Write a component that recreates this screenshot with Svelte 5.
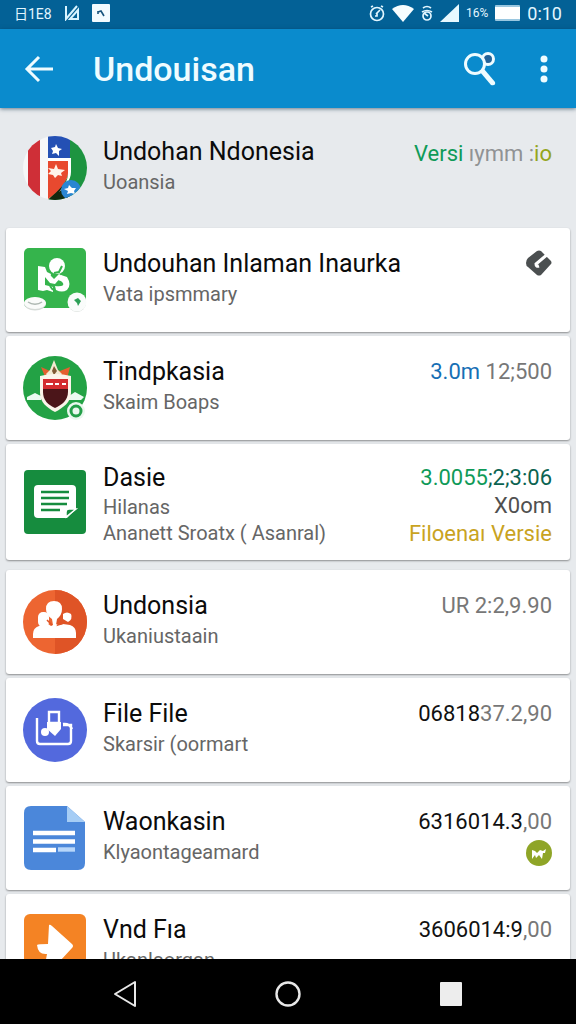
<script>
  const groups = [
    [
      {
        icon: "people",
        title: "Undouhan Inlaman Inaurka",
        lines: ["Vata ipsmmary"],
        meta: [],
        badge: "tag"
      },
      {
        icon: "crest",
        title: "Tindpkasia",
        lines: ["Skaim Boaps"],
        meta: [[["3.0m", "blue"], [" 12;500", "grey"]]]
      },
      {
        icon: "note",
        title: "Dasie",
        lines: ["Hilanas", "Ananett Sroatx ( Asanral)"],
        meta: [
          [["3.0055", "green"], [";2;3:06", "teal"]],
          [["X0om", "dark"]],
          [["Filoenaı Versie", "gold"]]
        ]
      }
    ],
    [
      {
        icon: "team",
        title: "Undonsia",
        lines: ["Ukaniustaain"],
        meta: [[["UR 2:2,9.90", "grey"]]]
      },
      {
        icon: "inbox",
        title: "File File",
        lines: ["Skarsir (oormart"],
        meta: [[["06818", "black"], ["37.2,90", "grey"]]]
      },
      {
        icon: "doc",
        title: "Waonkasin",
        lines: ["Klyaontageamard"],
        meta: [[["6316014.3", "black"], [",00", "grey"]]],
        badge: "leaf"
      },
      {
        icon: "arrow",
        title: "Vnd Fıa",
        lines: ["Ukanlaorgan"],
        meta: [[["3606014:9", "black"], [",00", "grey"]]]
      }
    ]
  ];
</script>

{#snippet rowIcon(name)}
  <svg class="row-icon" viewBox="0 0 64 64" aria-hidden="true">
    {#if name === "flag"}
      <clipPath id="flag-clip"><circle cx="32" cy="32" r="32" /></clipPath>
      <g clip-path="url(#flag-clip)">
        <rect width="64" height="64" fill="#f6f7f8" />
        <rect x="5" width="12" height="64" fill="#cf2f37" />
        <rect x="25" width="22" height="22" fill="#2450b4" />
        <path d="M47 0h17v64H25l19-22 3-18z" fill="#1d9440" />
        <path d="M25 64l14-14 10 14z" fill="#10280f" />
        <path d="M25 25h20v12c0 8-9 18-20 26z" fill="#e8492f" />
        <path d="M25 22h23v14c0 8-6 15-12 20 5-6 9-12 9-18V25H25z" fill="#fff" />
        <path d="M33 8l2 4 4 1-3 2v5l-3-3-4 1 1-3-2-3 4-1z" fill="#fff" />
        <path d="M33 28l2 5 7 1-4 3 1 3-4-1-3 3-2-3-5-1 3-3-3-3 6 1z" fill="#fff3ea" />
        <circle cx="48" cy="54" r="10" fill="#2a86d2" />
        <path d="M46 49l3 3 4 0-2 3 1 3-4-1-4 1 1-3-4-2 4-1z" fill="#fff" />
      </g>
    {:else if name === "people"}
      <rect x="1" width="62" height="60" rx="5" fill="#35b44c" />
      <circle cx="34" cy="18" r="8" fill="#fff" />
      <path d="M15 18l7 1 2 5 4 2-1 4-5-1v8l8 2v5l-6-2-4 1-5-1z" fill="#fff" />
      <path d="M22 29l5-2 4 4 5-5 3 2-7 8-5-1z" fill="#fff" />
      <path d="M38 27l6 2q5 8 0 13-5 3-11 0l-1-4q10 1 8-3-1-2-5-3z" fill="#fff" />
      <path d="M31 25l5-1 3-6M27 38l3 4" fill="none" stroke="#35b44c" stroke-width="2" />
      <ellipse cx="12" cy="56" rx="11" ry="6.500" fill="#d5dad7" />
      <ellipse cx="12" cy="55" rx="11" ry="6" fill="#fafbfa" />
      <path d="M5 54c4 3 10 3 14 0" fill="none" stroke="#aeb8b2" stroke-width="1.500" />
      <circle cx="54" cy="55" r="9" fill="#d5dad7" />
      <circle cx="54" cy="54" r="9.500" fill="#fafcfb" />
      <path d="M51 52l4-2 3 3-3 5-1-3z" fill="#2da057" />
    {:else if name === "crest"}
      <circle cx="32" cy="32" r="32" fill="#23a245" />
      <path d="M4 41l8-4 6 3v4H4zM46 40l6-4 9 5-3 3H46z" fill="#eafaf0" />
      <path d="M18 11l9 4 5-2 5 2 10-4-3 12H23z" fill="#e4602f" />
      <path d="M31 4l4 10 4 4-3 4h-10l-3-4 4-4z" fill="#f3ead2" />
      <path d="M31 10l3 5-3 4-2-4z" fill="#805a35" />
      <path d="M17 20q15-4 31 0v17c0 9-8 15-16 19-8-4-15-10-15-19z" fill="#fbf4ea" />
      <path d="M20 23h25v13c0 8-6 13-13 16-7-3-12-8-12-16z" fill="#4b1519" />
      <path d="M20 23h25v10H20z" fill="#d42c2f" />
      <path d="M23 28h7M32 28h4M39 28h4" stroke="#fff" stroke-width="2" />
      <circle cx="53" cy="55" r="9" fill="#eaf8ee" />
      <circle cx="53" cy="55" r="5" fill="none" stroke="#249f49" stroke-width="3" />
    {:else if name === "note"}
      <rect x="1" width="62" height="64" rx="4" fill="#168c3e" />
      <path d="M15 15h34q4 0 4 4v20l-9 9H15q-4 0-4-4V19q0-4 4-4z" fill="#fff" />
      <path d="M18 22h28M18 28h28M18 34h26M18 40h19" stroke="#168c3e" stroke-width="2.400" />
      <path d="M43 47v-5q0-3 3-3h7z" fill="#168c3e" stroke="#fff" stroke-width="1.500" />
    {:else if name === "team"}
      <circle cx="32" cy="32" r="32" fill="#ed6531" />
      <path d="M32 0a32 32 0 0 1 0 64z" fill="#df5426" />
      <path d="M10 48v-4q0-6 6-8l9-2 3 2 4-2 5 1 3-1 7 1q6 2 6 8v5z" fill="#fff" />
      <rect x="15" y="22" width="11" height="15" rx="5" fill="#fff" />
      <path d="M40 24q4-3 8 0 2 5-3 8l-5-3z" fill="#fff" />
      <path d="M31 11q8 0 8 8 0 6-5 10l-1 6h-3l-1-6q-6-4-6-10 0-8 8-8z" fill="#fff" />
      <path d="M24 30l5 5M38 30l-3 5 6-2" fill="none" stroke="#df5426" stroke-width="1.500" />
    {:else if name === "inbox"}
      <circle cx="32" cy="32" r="32" fill="#5369dd" />
      <path d="M14 20v23q0 3 3 3h28q3 0 3-3V27h-8" fill="none" stroke="#fff" stroke-width="2.400" />
      <path d="M26 14h10v11H26z" fill="none" stroke="#fff" stroke-width="2.400" />
      <path d="M24 24h14v7l-6 7-8-7z" fill="#fff" />
      <circle cx="22" cy="34" r="4" fill="#fff" />
      <path d="M40 26q6-1 9 5" fill="none" stroke="#fff" stroke-width="2.400" />
    {:else if name === "doc"}
      <path d="M8 0h36l18 16v41q0 7-7 7H8q-7 0-7-7V7q0-7 7-7z" fill="#4b87da" />
      <path d="M44 0l18 16H44z" fill="#a6cdf5" />
      <path d="M10 27h42M10 35.500h42M10 44h23" stroke="#fff" stroke-width="4.400" />
      <path d="M35 43.500h17" stroke="#b7d6fa" stroke-width="4.400" />
    {:else}
      <rect x="1" width="62" height="64" rx="6" fill="#f48324" />
      <path d="M26 11q1-1 3 1l20 18q2 2 0 4L25 60l-4-4 3-16q-9 1-10-9 1-1 11-1z" fill="#fff" />
    {/if}
  </svg>
{/snippet}

<div class="screen">
  <div class="status-bar">
    <span class="carrier">日1E8</span>
    <svg width="16" height="16" viewBox="0 0 16 16" aria-hidden="true">
      <path d="M2 1v13l11-13M6 14h8V5z" fill="none" stroke="#d8f4ff" stroke-width="2" />
    </svg>
    <svg width="18" height="18" viewBox="0 0 18 18" aria-hidden="true">
      <rect width="18" height="18" rx="1" fill="#f3fbff" />
      <path d="M6 8l3-1 3 5M6 7v3" fill="none" stroke="#17537d" stroke-width="1.600" />
    </svg>
    <div class="status-right">
      <svg width="16" height="18" viewBox="0 0 16 18" fill="none" stroke="#e2f6ff" stroke-width="1.700" aria-hidden="true">
        <circle cx="8" cy="10" r="6.500" />
        <path d="M7 10l4-4M8 9v3H6M2 3l2-1M12 2l2 1" />
      </svg>
      <svg width="22" height="18" viewBox="0 0 22 18" aria-hidden="true">
        <path d="M0 5q11-8 22 0L11 18z" fill="#f6fdff" />
      </svg>
      <svg width="12" height="18" viewBox="0 0 12 18" fill="none" stroke="#e2f6ff" stroke-width="1.700" aria-hidden="true">
        <path d="M2 4q4-3 8 0M1 8q5-3 10 0" />
        <circle cx="6" cy="12" r="4" />
        <path d="M3 9l4 3" />
      </svg>
      <svg width="19" height="18" viewBox="0 0 19 18" aria-hidden="true">
        <path d="M19 0v18H0z" fill="#e8f9ff" />
      </svg>
      <span class="percent">16%</span>
      <svg width="25" height="16" viewBox="0 0 25 16" aria-hidden="true">
        <rect width="25" height="16" rx="1" fill="#9ac7e0" />
        <rect y="2" width="25" height="12" fill="#fff" />
      </svg>
      <span class="clock">0:10</span>
    </div>
  </div>

  <header class="app-bar">
    <button aria-label="Back">
      <svg width="30" height="28" viewBox="0 0 30 28" fill="none" stroke="#effcff" stroke-width="3" aria-hidden="true">
        <path d="M29 14H4M15 2L3 14l12 12" />
      </svg>
    </button>
    <h1>Undouisan</h1>
    <button aria-label="Search">
      <svg width="34" height="36" viewBox="0 0 34 36" fill="none" stroke="#effcff" aria-hidden="true">
        <circle cx="25" cy="8" r="5.500" fill="#23649a" stroke-width="3" />
        <circle cx="12" cy="13" r="9.500" fill="#0a8bcd" stroke-width="3" />
        <path d="M17 21l4-3 11 13q1 4-4 3z" fill="#effcff" stroke="none" />
      </svg>
    </button>
    <button aria-label="More options">
      <svg width="8" height="28" viewBox="0 0 8 28" fill="#effcff" aria-hidden="true">
        <circle cx="4" cy="4" r="3.500" />
        <circle cx="4" cy="14" r="3.500" />
        <circle cx="4" cy="24" r="3.500" />
      </svg>
    </button>
  </header>

  <main>
    <div class="row intro">
      {@render rowIcon("flag")}
      <div class="text">
        <h2>Undohan Ndonesia</h2>
        <p>Uoansia</p>
      </div>
      <div class="meta">
        <p><span class="green">Versi</span> <span class="faint">ıymm :</span><span class="lime">io</span></p>
      </div>
    </div>

    {#each groups as group}
      <ul>
        {#each group as item}
          <li class="row card" class:tall={item.lines.length > 1}>
            {@render rowIcon(item.icon)}
            <div class="text">
              <h2>{item.title}</h2>
              {#each item.lines as line}
                <p>{line}</p>
              {/each}
            </div>
            <div class="meta">
              {#each item.meta as parts}
                <p>{#each parts as [text, tone]}<span class={tone}>{text}</span>{/each}</p>
              {/each}
              {#if item.badge === "tag"}
                <svg class="badge" viewBox="0 0 26 26" aria-hidden="true">
                  <path d="M11 1q2-1 4 0l10 10q1 2 0 3L15 25q-2 1-4 0l-9-8q-2-1-2-4t2-5z" fill="#4b4f50" />
                  <path d="M23 3L10 14q0 3 3 2" fill="none" stroke="#fff" stroke-width="3" />
                </svg>
              {:else if item.badge === "leaf"}
                <svg class="badge" viewBox="0 0 26 26" aria-hidden="true">
                  <circle cx="13" cy="13" r="13" fill="#8fa527" />
                  <path d="M6 10l3 1 2 2 3-3 3 1 3-2-1 4h-2l-1 6-3-4-3 3-1-3-3 4v-5z" fill="#fff" />
                </svg>
              {/if}
            </div>
          </li>
        {/each}
      </ul>
    {/each}
  </main>

  <nav>
    <button aria-label="Back">
      <svg width="24" height="28" viewBox="0 0 24 28" aria-hidden="true">
        <path d="M2 14L22 2v24z" fill="none" stroke="#e8e8e8" stroke-width="2" stroke-linejoin="round" />
      </svg>
    </button>
    <button aria-label="Home">
      <svg width="28" height="28" viewBox="0 0 28 28" aria-hidden="true">
        <circle cx="14" cy="14" r="11.500" fill="none" stroke="#e8e8e8" stroke-width="2.400" />
      </svg>
    </button>
    <button aria-label="Recent apps">
      <svg width="22" height="24" viewBox="0 0 22 24" aria-hidden="true">
        <rect width="22" height="24" rx="1" fill="#ededed" />
      </svg>
    </button>
  </nav>
</div>

<style>
  :global(body) {
    margin: 0;
    font-family: Roboto, "Noto Sans CJK JP", sans-serif;
  }

  .screen {
    display: flex;
    flex-direction: column;
    height: 100vh;
    background: #e7eaed;
  }

  h1, h2, p, ul {
    margin: 0;
    padding: 0;
    font-weight: 400;
  }

  button {
    display: flex;
    align-items: center;
    justify-content: center;
    padding: 0;
    border: 0;
    background: none;
  }

  .status-bar {
    display: flex;
    align-items: center;
    gap: 12px;
    height: 26px;
    padding: 0 14px 3px;
    background: #036196;
    color: #e2f6ff;
  }

  .carrier {
    font-size: 14px;
  }

  .status-right {
    display: flex;
    align-items: center;
    gap: 7px;
    margin-left: auto;
  }

  .percent {
    font-size: 12px;
  }

  .clock {
    font-size: 18px;
  }

  .app-bar {
    display: flex;
    align-items: center;
    gap: 24px;
    height: 79px;
    padding: 0 12px 0 24px;
    background: #0a8bcd;
    box-shadow: 0 1px 4px rgba(20, 50, 75, 0.6);
    z-index: 1;
  }

  .app-bar button {
    min-width: 40px;
    height: 48px;
  }

  .app-bar button:first-child {
    justify-content: flex-start;
    min-width: 45px;
  }

  h1 {
    flex: 1;
    font-size: 34px;
    font-weight: 500;
    color: #effcff;
  }

  main {
    flex: 1;
    min-height: 0;
    overflow-y: auto;
    scrollbar-width: none;
  }

  .row {
    display: flex;
    align-items: flex-start;
    gap: 16px;
    box-sizing: border-box;
    min-height: 104px;
    padding: 20px 18px 20px 17px;
  }

  .intro {
    min-height: 120px;
    padding: 28px 24px 20px 23px;
  }

  ul {
    display: flex;
    flex-direction: column;
    gap: 4px;
    margin: 0 6px 10px;
    list-style: none;
  }

  .card {
    background: #fff;
    border-radius: 3px;
    box-shadow: 0 1px 2px rgba(0, 0, 0, 0.4);
  }

  .row-icon {
    flex: none;
    width: 64px;
    height: 64px;
  }

  .text {
    flex: 1;
    min-width: 0;
    white-space: nowrap;
  }

  h2 {
    font-size: 25px;
    line-height: 32px;
    color: #0b0b0b;
  }

  .text p {
    font-size: 20px;
    line-height: 28px;
    color: #666;
  }

  .meta {
    display: flex;
    flex-direction: column;
    align-items: flex-end;
    gap: 4px;
    padding-top: 2px;
    font-size: 22px;
    line-height: 28px;
    white-space: nowrap;
  }

  .intro .meta {
    line-height: 32px;
  }

  .tall {
    min-height: 116px;
    padding-top: 18px;
    padding-bottom: 12px;
  }

  .tall .row-icon {
    margin-top: 8px;
  }

  .tall .text p {
    line-height: 26px;
  }

  .tall .meta {
    gap: 0;
  }

  .badge {
    width: 26px;
    height: 26px;
  }

  .blue { color: #176fb5; }
  .grey { color: #777; }
  .green { color: #0f9a58; }
  .teal { color: #0b6351; }
  .dark { color: #505050; }
  .gold { color: #c9a31f; }
  .black { color: #111; }
  .faint { color: #909294; }
  .lime { color: #94a51c; }

  nav {
    display: flex;
    height: 65px;
    padding: 0 43px;
    background: #000;
  }

  nav button {
    flex: 1;
    padding-top: 4px;
  }
</style>
